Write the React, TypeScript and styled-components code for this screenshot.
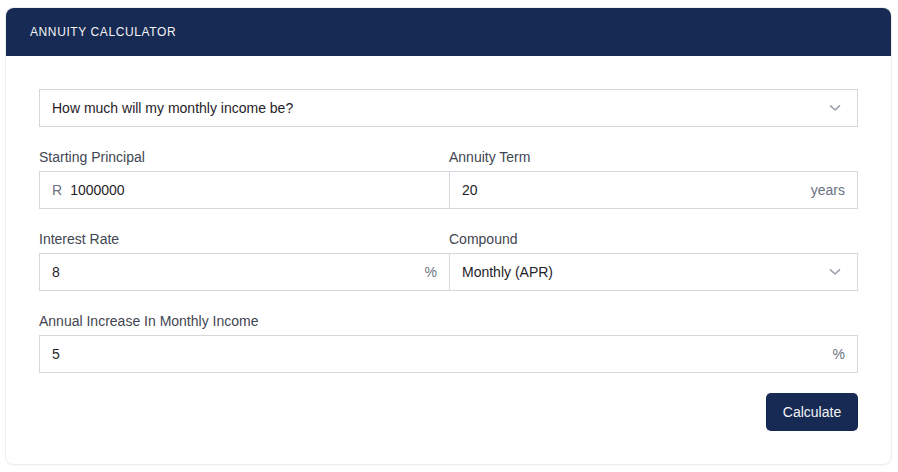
import React from "react";
import styled, { createGlobalStyle } from "styled-components";

const Global = createGlobalStyle`
  html, body { margin: 0; padding: 0; background: #ffffff; }
  body { font-family: "Liberation Sans", Arial, sans-serif; color: #212529; }
  * { box-sizing: border-box; }
`;

const Page = styled.div`
  padding: 8px 7px 8px 6px;
`;

const Card = styled.section`
  border-radius: 8px;
  background: #ffffff;
  box-shadow: 0 0 0 1px #eceef1, 0 1px 3px rgba(0, 0, 0, 0.08);
`;

const Header = styled.header`
  height: 48px;
  display: flex;
  align-items: center;
  padding: 0 24px;
  background: #172a53;
  border-radius: 8px 8px 0 0;
  color: #f3f4f6;
  font-size: 12px;
  letter-spacing: 0.6px;
  text-transform: uppercase;
`;

const Body = styled.div`
  padding: 33px 33px 33px 33px;
  display: flex;
  flex-direction: column;
  gap: 20px;
`;

const Row = styled.div`
  display: grid;
  grid-template-columns: 411px 1fr;
`;

const Field = styled.div<{ $joined?: boolean }>`
  display: flex;
  flex-direction: column;
  margin-left: ${(p) => (p.$joined ? "-1px" : "0")};
`;

const Label = styled.label`
  font-size: 14px;
  line-height: 20px;
  color: #3f4652;
  margin-bottom: 4px;
`;

const Box = styled.div`
  height: 38px;
  border: 1px solid #d4d7de;
  display: flex;
  align-items: center;
  padding: 0 12px;
  font-size: 14px;
  color: #1f2328;
  background: #fff;
`;

const SelectBox = styled(Box)`
  padding-right: 16px;
  justify-content: space-between;
`;

const Affix = styled.span<{ $end?: boolean }>`
  color: #6b7280;
  margin-right: ${(p) => (p.$end ? "0" : "8px")};
  margin-left: ${(p) => (p.$end ? "auto" : "0")};
`;

const Value = styled.span``;

const Actions = styled.div`
  display: flex;
  justify-content: flex-end;
`;

const Button = styled.button`
  height: 38px;
  width: 92px;
  border: none;
  border-radius: 5px;
  background: #172a53;
  color: #f3f4f6;
  font-family: "Liberation Sans", Arial, sans-serif;
  font-size: 14px;
  cursor: pointer;
`;

const Chevron = () => (
  <svg width="12" height="8" viewBox="0 0 12 8" fill="none">
    <path d="M1.5 1.8 L6 6 L10.5 1.8" stroke="#9aa1ad" strokeWidth="1.6" strokeLinecap="round" strokeLinejoin="round" />
  </svg>
);

export default function App() {
  return (
    <>
      <Global />
      <Page>
        <Card>
          <Header>Annuity Calculator</Header>
          <Body>
            <SelectBox>
              <Value>How much will my monthly income be?</Value>
              <Chevron />
            </SelectBox>
            <Row>
              <Field>
                <Label>Starting Principal</Label>
                <Box>
                  <Affix>R</Affix>
                  <Value>1000000</Value>
                </Box>
              </Field>
              <Field $joined>
                <Label>Annuity Term</Label>
                <Box>
                  <Value>20</Value>
                  <Affix $end>years</Affix>
                </Box>
              </Field>
            </Row>
            <Row>
              <Field>
                <Label>Interest Rate</Label>
                <Box>
                  <Value>8</Value>
                  <Affix $end>%</Affix>
                </Box>
              </Field>
              <Field $joined>
                <Label>Compound</Label>
                <SelectBox>
                  <Value>Monthly (APR)</Value>
                  <Chevron />
                </SelectBox>
              </Field>
            </Row>
            <Field>
              <Label>Annual Increase In Monthly Income</Label>
              <Box>
                <Value>5</Value>
                <Affix $end>%</Affix>
              </Box>
            </Field>
            <Actions>
              <Button>Calculate</Button>
            </Actions>
          </Body>
        </Card>
      </Page>
    </>
  );
}
